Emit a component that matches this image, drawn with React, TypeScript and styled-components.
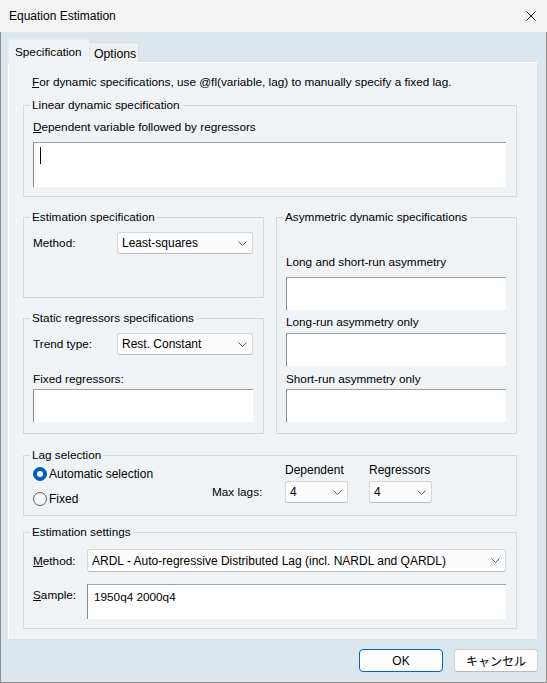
import styled, { createGlobalStyle } from "styled-components";

const GlobalStyle = createGlobalStyle`
	html, body {
		margin: 0;
		padding: 0;
		background: #ffffff;
	}
	body {
		font-family: "Liberation Sans", Arial, "Noto Sans CJK JP", sans-serif;
		font-size: 11.75px;
		color: #000;
	}
	* {
		box-sizing: border-box;
	}
`;

const Window = styled.div`
	width: 547px;
	height: 683px;
	display: flex;
	flex-direction: column;
	background: #dbe7ef;
`;

const TitleBar = styled.div`
	flex: none;
	height: 32px;
	display: flex;
	align-items: center;
	justify-content: space-between;
	padding: 0 11px 0 9px;
	background: #f3f3f3;
	font-size: 12px;
`;

const CloseIcon = styled.svg`
	width: 10px;
	height: 10px;
	display: block;
`;

const Body = styled.div`
	flex: 1;
	display: flex;
	flex-direction: column;
	padding: 7px 8px 0 7px;
	border: 1px solid #8f8f8f;
	border-top: none;
`;

const TabRow = styled.div`
	display: flex;
	align-items: flex-end;
	height: 23px;
`;

const Tab = styled.div<{ $active?: boolean }>`
	display: flex;
	align-items: center;
	position: relative;
	z-index: ${({ $active }) => ($active ? 1 : 0)};
	width: ${({ $active }) => ($active ? "82px" : "49px")};
	height: ${({ $active }) => ($active ? "24px" : "20px")};
	margin-bottom: ${({ $active }) => ($active ? "-1px" : "0")};
	padding: ${({ $active }) => ($active ? "0 0 0 6px" : "2px 0 0 4px")};
	background: ${({ $active }) => ($active ? "#eff3f6" : "#f0f0f0")};
	border: 1px solid ${({ $active }) => ($active ? "#e6eaed" : "#d9d9d9")};
	border-bottom: none;
	border-left: ${({ $active }) => ($active ? "1px solid #e6eaed" : "none")};
	font-size: ${({ $active }) => ($active ? "11.75px" : "12.25px")};
	white-space: nowrap;
`;

const Panel = styled.div`
	height: 578px;
	display: flex;
	flex-direction: column;
	padding: 11px 20px 0 14px;
	background: #eff3f6;
	border-top: 1px solid #ffffff;
	border-left: 1px solid #ffffff;
	border-right: 1px solid #dcdfe2;
	border-bottom: 1px solid #dcdfe2;
`;

const Intro = styled.div`
	line-height: 16px;
	padding-left: 9px;
`;

const Group = styled.fieldset<{ $gap?: number; $bottom?: number }>`
	margin: ${({ $gap }) => $gap ?? 0}px 0 0 0;
	min-width: 0;
	padding: 0 10px ${({ $bottom }) => $bottom ?? 9}px 9px;
	border: 1px solid #d4d9de;
	display: flex;
	flex-direction: column;
`;

const Legend = styled.legend`
	padding: 0 2px;
	margin-left: -3px;
	line-height: 16px;
`;

const FieldLabel = styled.div<{ $gap?: number }>`
	margin-top: ${({ $gap }) => $gap ?? 0}px;
	line-height: 16px;
`;

const TextBox = styled.div<{ $height: number; $gap?: number }>`
	height: ${({ $height }) => $height}px;
	margin-top: ${({ $gap }) => $gap ?? 0}px;
	padding: 4px 6px;
	background: #ffffff;
	border-top: 1px solid #a0a0a0;
	border-left: 1px solid #8a8a8a;
	line-height: 16px;
`;

const Caret = styled.span`
	display: block;
	width: 1px;
	height: 17px;
	background: #000;
`;

const MiddleGrid = styled.div`
	display: grid;
	grid-template-columns: 241px 241px;
	column-gap: 12px;
	margin-top: 12px;
`;

const Column = styled.div`
	display: flex;
	flex-direction: column;
	gap: 12px;
`;

const FormRow = styled.div<{ $label: number; $gap?: number; $top?: boolean }>`
	display: grid;
	grid-template-columns: ${({ $label }) => $label}px 1fr;
	align-items: ${({ $top }) => ($top ? "start" : "center")};
	margin-top: ${({ $gap }) => $gap ?? 0}px;
`;

const RowLabel = styled.span<{ $pad?: number }>`
	padding-top: ${({ $pad }) => $pad ?? 0}px;
	line-height: 16px;
`;

const Select = styled.div<{ $width?: number; $height?: number }>`
	display: flex;
	align-items: center;
	justify-content: space-between;
	width: ${({ $width }) => ($width ? `${$width}px` : "auto")};
	height: ${({ $height }) => $height ?? 22}px;
	padding: 0 5px 0 4px;
	background: #fcfcfc;
	border: 1px solid #d5d5d5;
	border-bottom-color: #bdbdbd;
	border-radius: 3px;
	font-size: 12px;
	white-space: nowrap;
`;

const Chevron = styled.svg`
	width: 9px;
	height: 5px;
	display: block;
	flex: none;
`;

const LagGrid = styled.div`
	display: grid;
	grid-template-columns: 179px 73px 84px 1fr;
	align-items: start;
`;

const RadioList = styled.div`
	display: flex;
	flex-direction: column;
	gap: 5px;
	margin-top: 1px;
`;

const RadioRow = styled.label`
	display: flex;
	align-items: center;
	gap: 2px;
	height: 20px;
	font-size: 12px;
`;

const RadioCircle = styled.span<{ $checked?: boolean }>`
	display: flex;
	align-items: center;
	justify-content: center;
	width: 14px;
	height: 14px;
	border-radius: 50%;
	background: ${({ $checked }) => ($checked ? "#005fb8" : "#f7f7f7")};
	border: 1px solid ${({ $checked }) => ($checked ? "#005fb8" : "#5a5a5a")};

	&::after {
		content: "";
		display: ${({ $checked }) => ($checked ? "block" : "none")};
		width: 6px;
		height: 6px;
		border-radius: 50%;
		background: #ffffff;
	}
`;

const MaxLabel = styled.span`
	padding-top: 18px;
	line-height: 22px;
`;

const LagColumn = styled.div`
	display: flex;
	flex-direction: column;
	gap: 4px;
`;

const LagLabel = styled.span`
	line-height: 14px;
	font-size: 12px;
`;

const Footer = styled.div`
	display: flex;
	justify-content: flex-end;
	gap: 11px;
	padding-top: 9px;
`;

const Button = styled.button<{ $primary?: boolean }>`
	width: 84px;
	height: 23px;
	padding: 0;
	background: #fdfdfd;
	border: 1px solid ${({ $primary }) => ($primary ? "#0067c0" : "#d0d0d0")};
	border-bottom-color: ${({ $primary }) => ($primary ? "#0067c0" : "#b8b8b8")};
	border-radius: 4px;
	font-family: "Liberation Sans", Arial, "Noto Sans CJK JP", sans-serif;
	font-size: 12px;
	color: #000;
`;

function Combo({ value, width, height }: { value: string; width?: number; height?: number }) {
	return (
		<Select $width={width} $height={height}>
			<span>{value}</span>
			<Chevron viewBox="0 0 9 5">
				<polyline points="0.5,0.5 4.5,4.5 8.5,0.5" fill="none" stroke="#5c5c5c" strokeWidth="1" />
			</Chevron>
		</Select>
	);
}

function App() {
	return (
		<>
			<GlobalStyle />
			<Window>
				<TitleBar>
					<span>Equation Estimation</span>
					<CloseIcon viewBox="0 0 10 10">
						<path d="M0.5 0.5 L9.5 9.5 M9.5 0.5 L0.5 9.5" stroke="#1a1a1a" strokeWidth="1" />
					</CloseIcon>
				</TitleBar>
				<Body>
					<TabRow>
						<Tab $active>Specification</Tab>
						<Tab>Options</Tab>
					</TabRow>
					<Panel>
						<Intro>
							<u>F</u>or dynamic specifications, use @fl(variable, lag) to manually specify a fixed lag.
						</Intro>

						<Group $gap={7}>
							<Legend>Linear dynamic specification</Legend>
							<FieldLabel $gap={6}>
								<u>D</u>ependent variable followed by regressors
							</FieldLabel>
							<TextBox $height={45} $gap={7}>
								<Caret />
							</TextBox>
						</Group>

						<MiddleGrid>
							<Column>
								<Group $bottom={43}>
									<Legend>Estimation specification</Legend>
									<FormRow $label={84} $gap={7}>
										<RowLabel>Method:</RowLabel>
										<Combo value="Least-squares" />
									</FormRow>
								</Group>
								<Group $bottom={11}>
									<Legend>Static regressors specifications</Legend>
									<FormRow $label={84} $gap={7}>
										<RowLabel>Trend type:</RowLabel>
										<Combo value="Rest. Constant" />
									</FormRow>
									<FieldLabel $gap={16}>Fixed regressors:</FieldLabel>
									<TextBox $height={33} $gap={2} />
								</Group>
							</Column>
							<Group $bottom={10}>
								<Legend>Asymmetric dynamic specifications</Legend>
								<FieldLabel $gap={29}>Long and short-run asymmetry</FieldLabel>
								<TextBox $height={33} $gap={7} />
								<FieldLabel $gap={4}>Long-run asymmetry only</FieldLabel>
								<TextBox $height={33} $gap={3} />
								<FieldLabel $gap={5}>Short-run asymmetry only</FieldLabel>
								<TextBox $height={33} $gap={2} />
							</Group>
						</MiddleGrid>

						<Group $gap={13} $bottom={6}>
							<Legend>Lag selection</Legend>
							<LagGrid>
								<RadioList>
									<RadioRow>
										<RadioCircle $checked />
										Automatic selection
									</RadioRow>
									<RadioRow>
										<RadioCircle />
										Fixed
									</RadioRow>
								</RadioList>
								<MaxLabel>Max lags:</MaxLabel>
								<LagColumn>
									<LagLabel>Dependent</LagLabel>
									<Combo value="4" width={63} />
								</LagColumn>
								<LagColumn>
									<LagLabel>Regressors</LagLabel>
									<Combo value="4" width={63} />
								</LagColumn>
							</LagGrid>
						</Group>

						<Group $gap={8} $bottom={9}>
							<Legend>Estimation settings</Legend>
							<FormRow $label={54} $gap={9}>
								<RowLabel>
									<u>M</u>ethod:
								</RowLabel>
								<Combo value="ARDL - Auto-regressive Distributed Lag (incl. NARDL and QARDL)" height={23} />
							</FormRow>
							<FormRow $label={54} $gap={12} $top>
								<RowLabel $pad={3}>
									<u>S</u>ample:
								</RowLabel>
								<TextBox $height={35}>1950q4 2000q4</TextBox>
							</FormRow>
						</Group>
					</Panel>
					<Footer>
						<Button $primary>OK</Button>
						<Button>キャンセル</Button>
					</Footer>
				</Body>
			</Window>
		</>
	);
}

export default App;
